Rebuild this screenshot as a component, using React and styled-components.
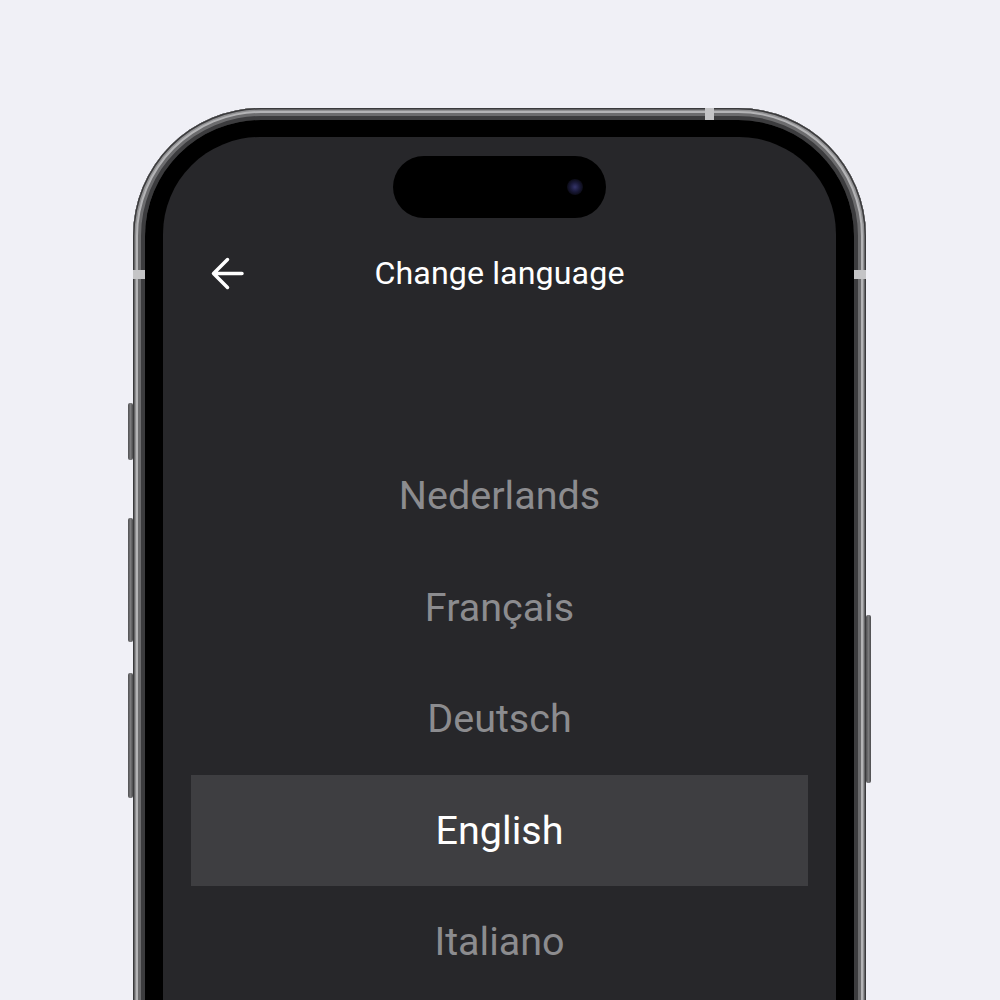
import React from "react";
import styled, { createGlobalStyle } from "styled-components";

const Global = createGlobalStyle`
  html, body { margin: 0; padding: 0; }
  body {
    width: 1000px;
    height: 1000px;
    overflow: hidden;
    background: #f0f0f6;
    font-family: Roboto, "Noto Sans", sans-serif;
  }
`;

const Page = styled.div`
  width: 1000px;
  height: 1000px;
  overflow: hidden;
  padding: 108px 0 0 133px;
  box-sizing: border-box;
`;

const Phone = styled.div`
  position: relative;
  width: 733px;
  height: 1100px;
`;

const Frame = styled.div`
  width: 100%;
  height: 100%;
  box-sizing: border-box;
  padding: 12px;
  border-radius: 128px;
  background: linear-gradient(90deg, #6a6a6c, #4c4c4e 50%, #6a6a6c);
  box-shadow:
    inset 0 0 0 1.5px #3a3a3c,
    inset 0 0 0 3px #8e8e90,
    inset 0 0 0 5px #b4b4b6,
    inset 0 0 0 8px #6c6c6e,
    inset 0 0 0 12px #3c3c3e;
`;

const Bezel = styled.div`
  width: 100%;
  height: 100%;
  box-sizing: border-box;
  padding: 17px 18px 0;
  border-radius: 116px;
  background: #000;
`;

const Screen = styled.div`
  width: 100%;
  height: 100%;
  border-radius: 97px;
  background: #27272a;
  display: flex;
  flex-direction: column;
  align-items: stretch;
  overflow: hidden;
`;

const SideButton = styled.div`
  position: absolute;
  width: 5px;
  background: linear-gradient(90deg, #505052, #7a7a7c 50%, #4a4a4c);
  border-radius: 2px;
  ${(p) => (p.$side === "left" ? "left: -5px;" : "right: -5px;")}
  top: ${(p) => p.$top}px;
  height: ${(p) => p.$h}px;
`;

const Antenna = styled.div`
  position: absolute;
  background: #c4c4c6;
  ${(p) => p.$css}
`;

const Island = styled.div`
  position: relative;
  align-self: center;
  margin-top: 19px;
  width: 213px;
  height: 62px;
  border-radius: 31px;
  background: #000;
  flex-shrink: 0;
`;

const Camera = styled.div`
  position: absolute;
  right: 23px;
  top: 23px;
  width: 16px;
  height: 16px;
  border-radius: 50%;
  background: radial-gradient(circle, #34346a 0%, #1a1a3a 40%, #07070c 80%);
`;

const Header = styled.div`
  display: grid;
  grid-template-columns: 1fr auto 1fr;
  align-items: center;
  height: 110px;
  padding: 0 47px;
  flex-shrink: 0;
`;

const BackButton = styled.button`
  justify-self: start;
  display: flex;
  align-items: center;
  padding: 0;
  margin: 0;
  border: none;
  background: none;
  cursor: pointer;
`;

const Title = styled.h1`
  margin: 0;
  font-family: Roboto, sans-serif;
  font-weight: 400;
  font-size: 32.2px;
  color: #ffffff;
  letter-spacing: 0.1px;
`;

const List = styled.ul`
  list-style: none;
  margin: 112px 0 0;
  padding: 0;
  display: flex;
  flex-direction: column;
`;

const Item = styled.li`
  height: 111.5px;
  margin: 0 28px;
  display: flex;
  align-items: center;
  justify-content: center;
  font-family: Roboto, sans-serif;
  font-size: 39.5px;
  font-weight: 400;
  color: ${(p) => (p.$active ? "#ffffff" : "#8c8c8f")};
  background: ${(p) => (p.$active ? "#3e3e41" : "transparent")};
`;

const languages = ["Nederlands", "Français", "Deutsch", "English", "Italiano"];

export default function App() {
  return (
    <>
      <Global />
      <Page>
        <Phone>
          <SideButton $side="left" $top={295} $h={57} />
          <SideButton $side="left" $top={410} $h={124} />
          <SideButton $side="left" $top={565} $h={125} />
          <SideButton $side="right" $top={507} $h={168} />
          <Antenna $css="left: 572px; top: 0; width: 9px; height: 12px;" />
          <Antenna $css="left: 0; top: 162px; width: 12px; height: 9px;" />
          <Antenna $css="right: 0; top: 162px; width: 12px; height: 9px;" />
          <Frame>
            <Bezel>
              <Screen>
                <Island>
                  <Camera />
                </Island>
                <Header>
                  <BackButton aria-label="Back">
                    <svg width="34" height="33" viewBox="0 0 34 33" fill="none">
                      <path
                        d="M32 16.5H3.5M17.5 2.5L3.5 16.5L17.5 30.5"
                        stroke="#fff"
                        strokeWidth="3.5"
                        strokeLinecap="round"
                        strokeLinejoin="round"
                      />
                    </svg>
                  </BackButton>
                  <Title>Change language</Title>
                  <span />
                </Header>
                <List>
                  {languages.map((l) => (
                    <Item key={l} $active={l === "English"}>
                      {l}
                    </Item>
                  ))}
                </List>
              </Screen>
            </Bezel>
          </Frame>
        </Phone>
      </Page>
    </>
  );
}
